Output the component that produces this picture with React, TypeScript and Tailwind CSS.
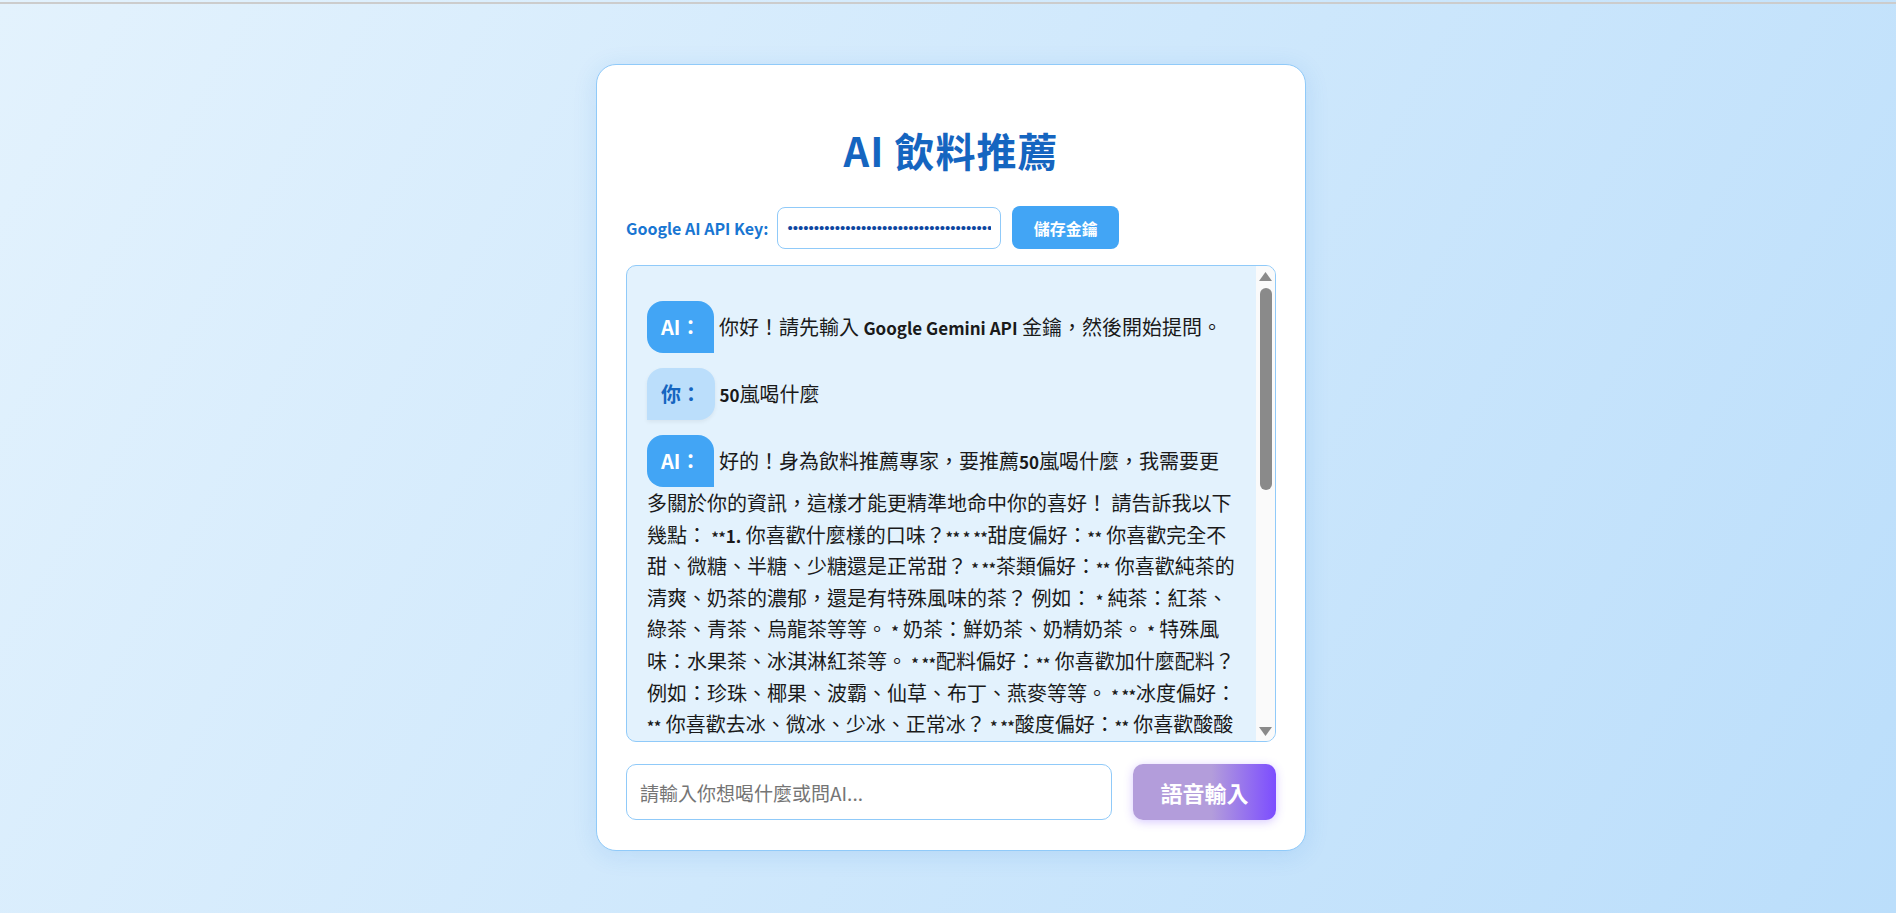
import React from "react";

const FONT = { fontFamily: '"Noto Sans CJK TC", "Noto Sans", sans-serif' };

function B({ children }: { children: React.ReactNode }) {
  return <span className="text-[17px] leading-none font-bold">{children}</span>;
}

function S({ children }: { children: React.ReactNode }) {
  return <span className="text-[14px] leading-none font-bold">{children}</span>;
}

function AIBubble() {
  return (
    <span className="inline-block rounded-tl-[16px] rounded-tr-[16px] rounded-bl-[16px] bg-[#42a5f5] px-[14px] py-[10px] leading-[32px] font-bold text-white">
      AI：
    </span>
  );
}

function UserBubble() {
  return (
    <span className="inline-block rounded-tl-[16px] rounded-tr-[16px] rounded-br-[16px] bg-[#bbdefb] px-[14px] py-[10px] leading-[32px] font-bold text-[#1565c0] shadow-[0_2px_4px_rgba(0,0,0,0.06)]">
      你：
    </span>
  );
}

function FakeScrollbar() {
  return (
    <div className="absolute top-0 right-0 flex h-full w-[19px] flex-col items-center bg-[#fafafa] pt-[6px] pb-[5px]">
      <svg width="13" height="9" viewBox="0 0 13 9">
        <polygon points="6.5,0 13,9 0,9" fill="#8a8a8a" />
      </svg>
      <div className="mt-[7px] h-[202px] w-[12px] rounded-full bg-[#8a8a8a]" />
      <div className="flex-1" />
      <svg width="13" height="9" viewBox="0 0 13 9">
        <polygon points="0,0 13,0 6.5,9" fill="#8a8a8a" />
      </svg>
    </div>
  );
}

export default function App() {
  return (
    <div
      className="min-h-screen w-full bg-[linear-gradient(120deg,#e3f2fd_0%,#bbdefb_100%)]"
      style={FONT}
    >
      <div className="h-[2px]" />
      <div className="h-[2px] bg-[#cccccc]" />
      <div className="flex justify-center pt-[60px] pb-[62px] pl-[6px]">
        <div className="flex w-[710px] flex-col rounded-[20px] border border-[#90caf9] bg-white px-[29px] pt-[30px] pb-[30px] shadow-[0_4px_24px_rgba(25,118,210,0.12)]">
          <h1 className="mt-[31px] text-center text-[40px] leading-[48px] font-bold tracking-[1px] text-[#1565c0]">
            AI 飲料推薦
          </h1>

          <div className="mt-[32px] flex items-center">
            <label className="text-[16px] font-bold text-[#1976d2]">Google AI API Key:</label>
            <input
              type="password"
              readOnly
              value="AIzaSyD8xK2mQ7vR3pL9nT4wB6cF1hJ5gZ0eY2uIoPqWs"
              className="ml-[9px] h-[42px] w-[224px] rounded-[8px] border border-[#90caf9] bg-white px-[9px] text-[15px] text-[#0d47a1] outline-none"
              style={{ fontFamily: '"Liberation Sans", sans-serif' }}
            />
            <button className="ml-[11px] h-[43px] w-[107px] rounded-[8px] bg-[#42a5f5] text-[16px] font-bold text-white">
              儲存金鑰
            </button>
          </div>

          <div className="relative mt-[16px] h-[477px] overflow-hidden rounded-[10px] border border-[#90caf9] bg-[#e3f2fd]">
            <div className="h-full overflow-y-auto py-[20px] pr-[39px] pl-[20px] text-[20px] leading-[31.6px] text-[#1a1a1a] [scrollbar-width:none] [&::-webkit-scrollbar]:hidden">
              <div className="my-[15px]">
                <AIBubble /> 你好！請先輸入 <B>Google Gemini API</B> 金鑰，然後開始提問。
              </div>
              <div className="my-[15px]">
                <UserBubble /> <B>50</B>嵐喝什麼
              </div>
              <div className="my-[15px]">
                <AIBubble /> 好的！身為飲料推薦專家，要推薦<B>50</B>嵐喝什麼，我需要更多關於你的資訊，這樣才能更精準地命中你的喜好！ 請告訴我以下幾點： <S>**</S><B>1.</B> 你喜歡什麼樣的口味？<S>** * **</S>甜度偏好：<S>**</S> 你喜歡完全不甜、微糖、半糖、少糖還是正常甜？ <S>* **</S>茶類偏好：<S>**</S> 你喜歡純茶的清爽、奶茶的濃郁，還是有特殊風味的茶？ 例如： <S>*</S> 純茶：紅茶、綠茶、青茶、烏龍茶等等。 <S>*</S> 奶茶：鮮奶茶、奶精奶茶。 <S>*</S> 特殊風味：水果茶、冰淇淋紅茶等。 <S>* **</S>配料偏好：<S>**</S> 你喜歡加什麼配料？ 例如：珍珠、椰果、波霸、仙草、布丁、燕麥等等。 <S>* **</S>冰度偏好：<S>**</S> 你喜歡去冰、微冰、少冰、正常冰？ <S>* **</S>酸度偏好：<S>**</S> 你喜歡酸酸甜甜的口味嗎？ 例如：檸檬、百香果、葡萄柚等。 <S>**</S><B>2.</B> 你今天的心情或天氣如何？<S>** *</S> 天氣炎熱想要清涼解渴，還是天氣涼想喝溫暖的飲料？ <S>*</S> 想要提神還是想要放鬆？ <S>**</S><B>3.</B> 有沒有什麼不能喝或不喜歡的？<S>** *</S> 例如：不喝咖啡因、乳糖不耐、不喜歡太甜等等。 <S>**</S><B>4.</B> 你有預算上的考量嗎？<S>** *</S> 中杯或大杯？ 告訴我以上資訊後，我就能為你推薦最適合你的<B>50</B>嵐飲料喔！ 如果你還沒有想法，我也可以先推薦幾款人氣飲品：<S>*</S> 四季春青茶、<S>*</S> 波霸奶茶、<S>*</S> <B>8</B>冰綠、<S>*</S> 冰淇淋紅茶、<S>*</S> 檸檬綠、<S>*</S> <B>1</B>號（四季春加珍波椰）。 期待你的回覆！
              </div>
            </div>
            <FakeScrollbar />
          </div>

          <div className="mt-[22px] flex items-center gap-[21px]">
            <input
              type="text"
              placeholder="請輸入你想喝什麼或問AI..."
              className="h-[56px] flex-1 rounded-[10px] border border-[#90caf9] bg-white px-[13px] text-[19px] text-[#1a1a1a] outline-none placeholder:text-[#757575]"
            />
            <button className="h-[56px] w-[143px] rounded-[10px] bg-[linear-gradient(90deg,#b39ddb_0%,#b39ddb_55%,#7c4dff_100%)] text-[22px] font-bold text-white shadow-[0_2px_10px_rgba(124,77,255,0.3)]">
              語音輸入
            </button>
          </div>
        </div>
      </div>
    </div>
  );
}
